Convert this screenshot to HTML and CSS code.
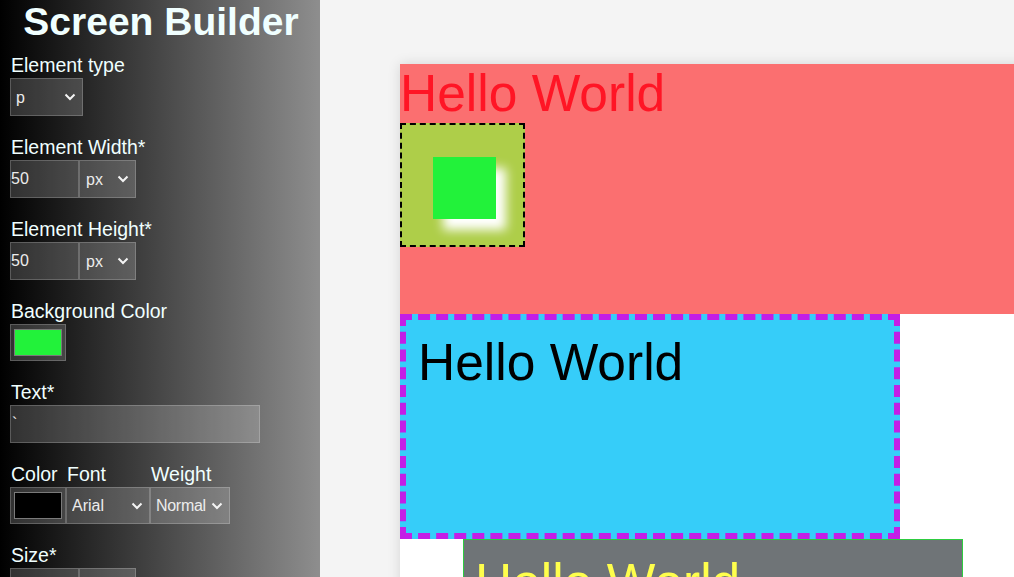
FILE: index.html
```html
<!DOCTYPE html>
<html lang="en">
<head>
<meta charset="utf-8">
<title>Screen Builder</title>
<link rel="stylesheet" href="styles.css">
</head>
<body>
<div class="app">
  <aside class="sidebar">
    <h1 class="title">Screen Builder</h1>

    <div class="field first">
      <label class="label">Element type</label>
      <div class="controls">
        <select class="ctl sel sel-type"><option>p</option></select>
      </div>
    </div>

    <div class="field">
      <label class="label">Element Width*</label>
      <div class="controls">
        <input class="ctl num" type="text" value="50">
        <select class="ctl sel sel-unit"><option>px</option></select>
      </div>
    </div>

    <div class="field">
      <label class="label">Element Height*</label>
      <div class="controls">
        <input class="ctl num" type="text" value="50">
        <select class="ctl sel sel-unit"><option>px</option></select>
      </div>
    </div>

    <div class="field">
      <label class="label">Background Color</label>
      <div class="controls short">
        <div class="ctl colorbox"><span class="swatch swatch-green"></span></div>
      </div>
    </div>

    <div class="field">
      <label class="label">Text*</label>
      <div class="controls">
        <input class="ctl text" type="text" value="`">
      </div>
    </div>

    <div class="field row3">
      <div class="col col-color">
        <label class="label">Color</label>
        <div class="controls short">
          <div class="ctl colorbox"><span class="swatch swatch-black"></span></div>
        </div>
      </div>
      <div class="col col-font">
        <label class="label">Font</label>
        <div class="controls short">
          <select class="ctl sel sel-font"><option>Arial</option></select>
        </div>
      </div>
      <div class="col col-weight">
        <label class="label">Weight</label>
        <div class="controls short">
          <select class="ctl sel sel-weight"><option>Normal</option></select>
        </div>
      </div>
    </div>

    <div class="field">
      <label class="label">Size*</label>
      <div class="controls">
        <input class="ctl num" type="text" value="">
        <select class="ctl sel sel-unit"><option></option></select>
      </div>
    </div>
  </aside>

  <main class="main">
    <div class="canvas">
      <div class="el-red">
        <p class="el-text">Hello World</p>
        <div class="el-box">
          <div class="el-green"></div>
        </div>
      </div>
      <div class="el-blue">
        <p class="el-text">Hello World</p>
      </div>
      <div class="el-grey">
        <p class="el-text">Hello World</p>
      </div>
    </div>
  </main>
</div>
</body>
</html>
```

FILE: styles.css
```css
* {
  box-sizing: border-box;
}

html, body {
  margin: 0;
  padding: 0;
  height: 100%;
  overflow: hidden;
  font-family: "Liberation Sans", Arial, sans-serif;
}

.app {
  display: flex;
  height: 100vh;
}

/* ---------- Sidebar ---------- */
.sidebar {
  width: 320px;
  flex: 0 0 320px;
  height: 100%;
  background: linear-gradient(to right, #000 0%, #8e8e8e 100%);
  color: #f0ffff;
  padding-left: 10px;
  overflow: hidden;
}

.title {
  margin: -1px 0 0 -8px;
  font-size: 39px;
  line-height: 46px;
  font-weight: bold;
  text-align: center;
  color: #f0ffff;
}

.field {
  margin-bottom: 19px;
}

.field.first {
  margin-top: 8px;
}

.label {
  display: block;
  font-size: 19.5px;
  line-height: 25px;
  padding-left: 1px;
  color: #f0ffff;
  white-space: nowrap;
}

.controls {
  display: flex;
  height: 38px;
}

.controls.short {
  height: 37px;
}

.ctl {
  height: 100%;
  margin: 0;
  border: 1px solid rgba(255, 255, 255, 0.2);
  border-radius: 0;
  background-color: rgba(255, 255, 255, 0.18);
  color: #ececec;
  font-family: "Liberation Sans", Arial, sans-serif;
  font-size: 16px;
  outline: none;
}

.sel {
  -webkit-appearance: none;
  appearance: none;
  padding: 0 0 0 5px;
  background-image: url("data:image/svg+xml;utf8,<svg xmlns='http://www.w3.org/2000/svg' width='12' height='8' viewBox='0 0 12 8'><polyline points='1.5,1.5 6,6 10.5,1.5' fill='none' stroke='%23f4f4f4' stroke-width='2'/></svg>");
  background-repeat: no-repeat;
  background-position: right 6px center;
  background-size: 12px 8px;
}

.sel-type { width: 73px; }
.sel-unit { width: 57px; padding-left: 6px; }
.sel-font { width: 84px; padding-left: 5px; }
.sel-weight { width: 80px; padding-left: 5px; letter-spacing: -0.3px; }

.num {
  width: 69px;
  padding: 0;
}

.text {
  width: 250px;
  padding: 0 0 0 1px;
}

.colorbox {
  width: 56px;
  padding: 4px 3px;
  display: flex;
}

.swatch {
  display: block;
  flex: 1;
  border: 1px solid #7a7a7a;
}

.swatch-green { background: #22f23a; }
.swatch-black { background: #000; }

.row3 {
  display: flex;
}

.col-color { width: 56px; }
.col-font { width: 84px; }
.col-weight { width: 80px; }

/* ---------- Main canvas area ---------- */
.main {
  flex: 1;
  background: #f4f4f4;
  padding: 64px 0 0 80px;
  overflow: hidden;
}

.canvas {
  width: 900px;
  height: 700px;
  background: #fff;
  box-shadow: 0 0 12px rgba(0, 0, 0, 0.13);
}

.el-text {
  margin: 0;
  font-size: 51.5px;
  white-space: nowrap;
}

.el-red {
  width: 100%;
  height: 250px;
  background: #fb6f70;
  color: #ff1525;
}

.el-red .el-text {
  line-height: 59px;
}

.el-box {
  width: 125px;
  height: 124px;
  border: 2px dashed #000;
  background: #aece49;
  padding: 32px 0 0 31px;
}

.el-green {
  width: 63px;
  height: 62px;
  background: #22f23a;
  box-shadow: 10px 11px 10px #fff;
}

.el-blue {
  width: 500px;
  height: 225px;
  border: 6px dashed #c31ee6;
  background: #36cdf9;
  color: #000;
  padding: 12px 12px;
}

.el-grey {
  width: 500px;
  height: 200px;
  margin-left: 63px;
  border: 1px solid #2ecc40;
  background: #6f7477;
  color: #ffff4c;
  padding: 12px 11px;
}
```
